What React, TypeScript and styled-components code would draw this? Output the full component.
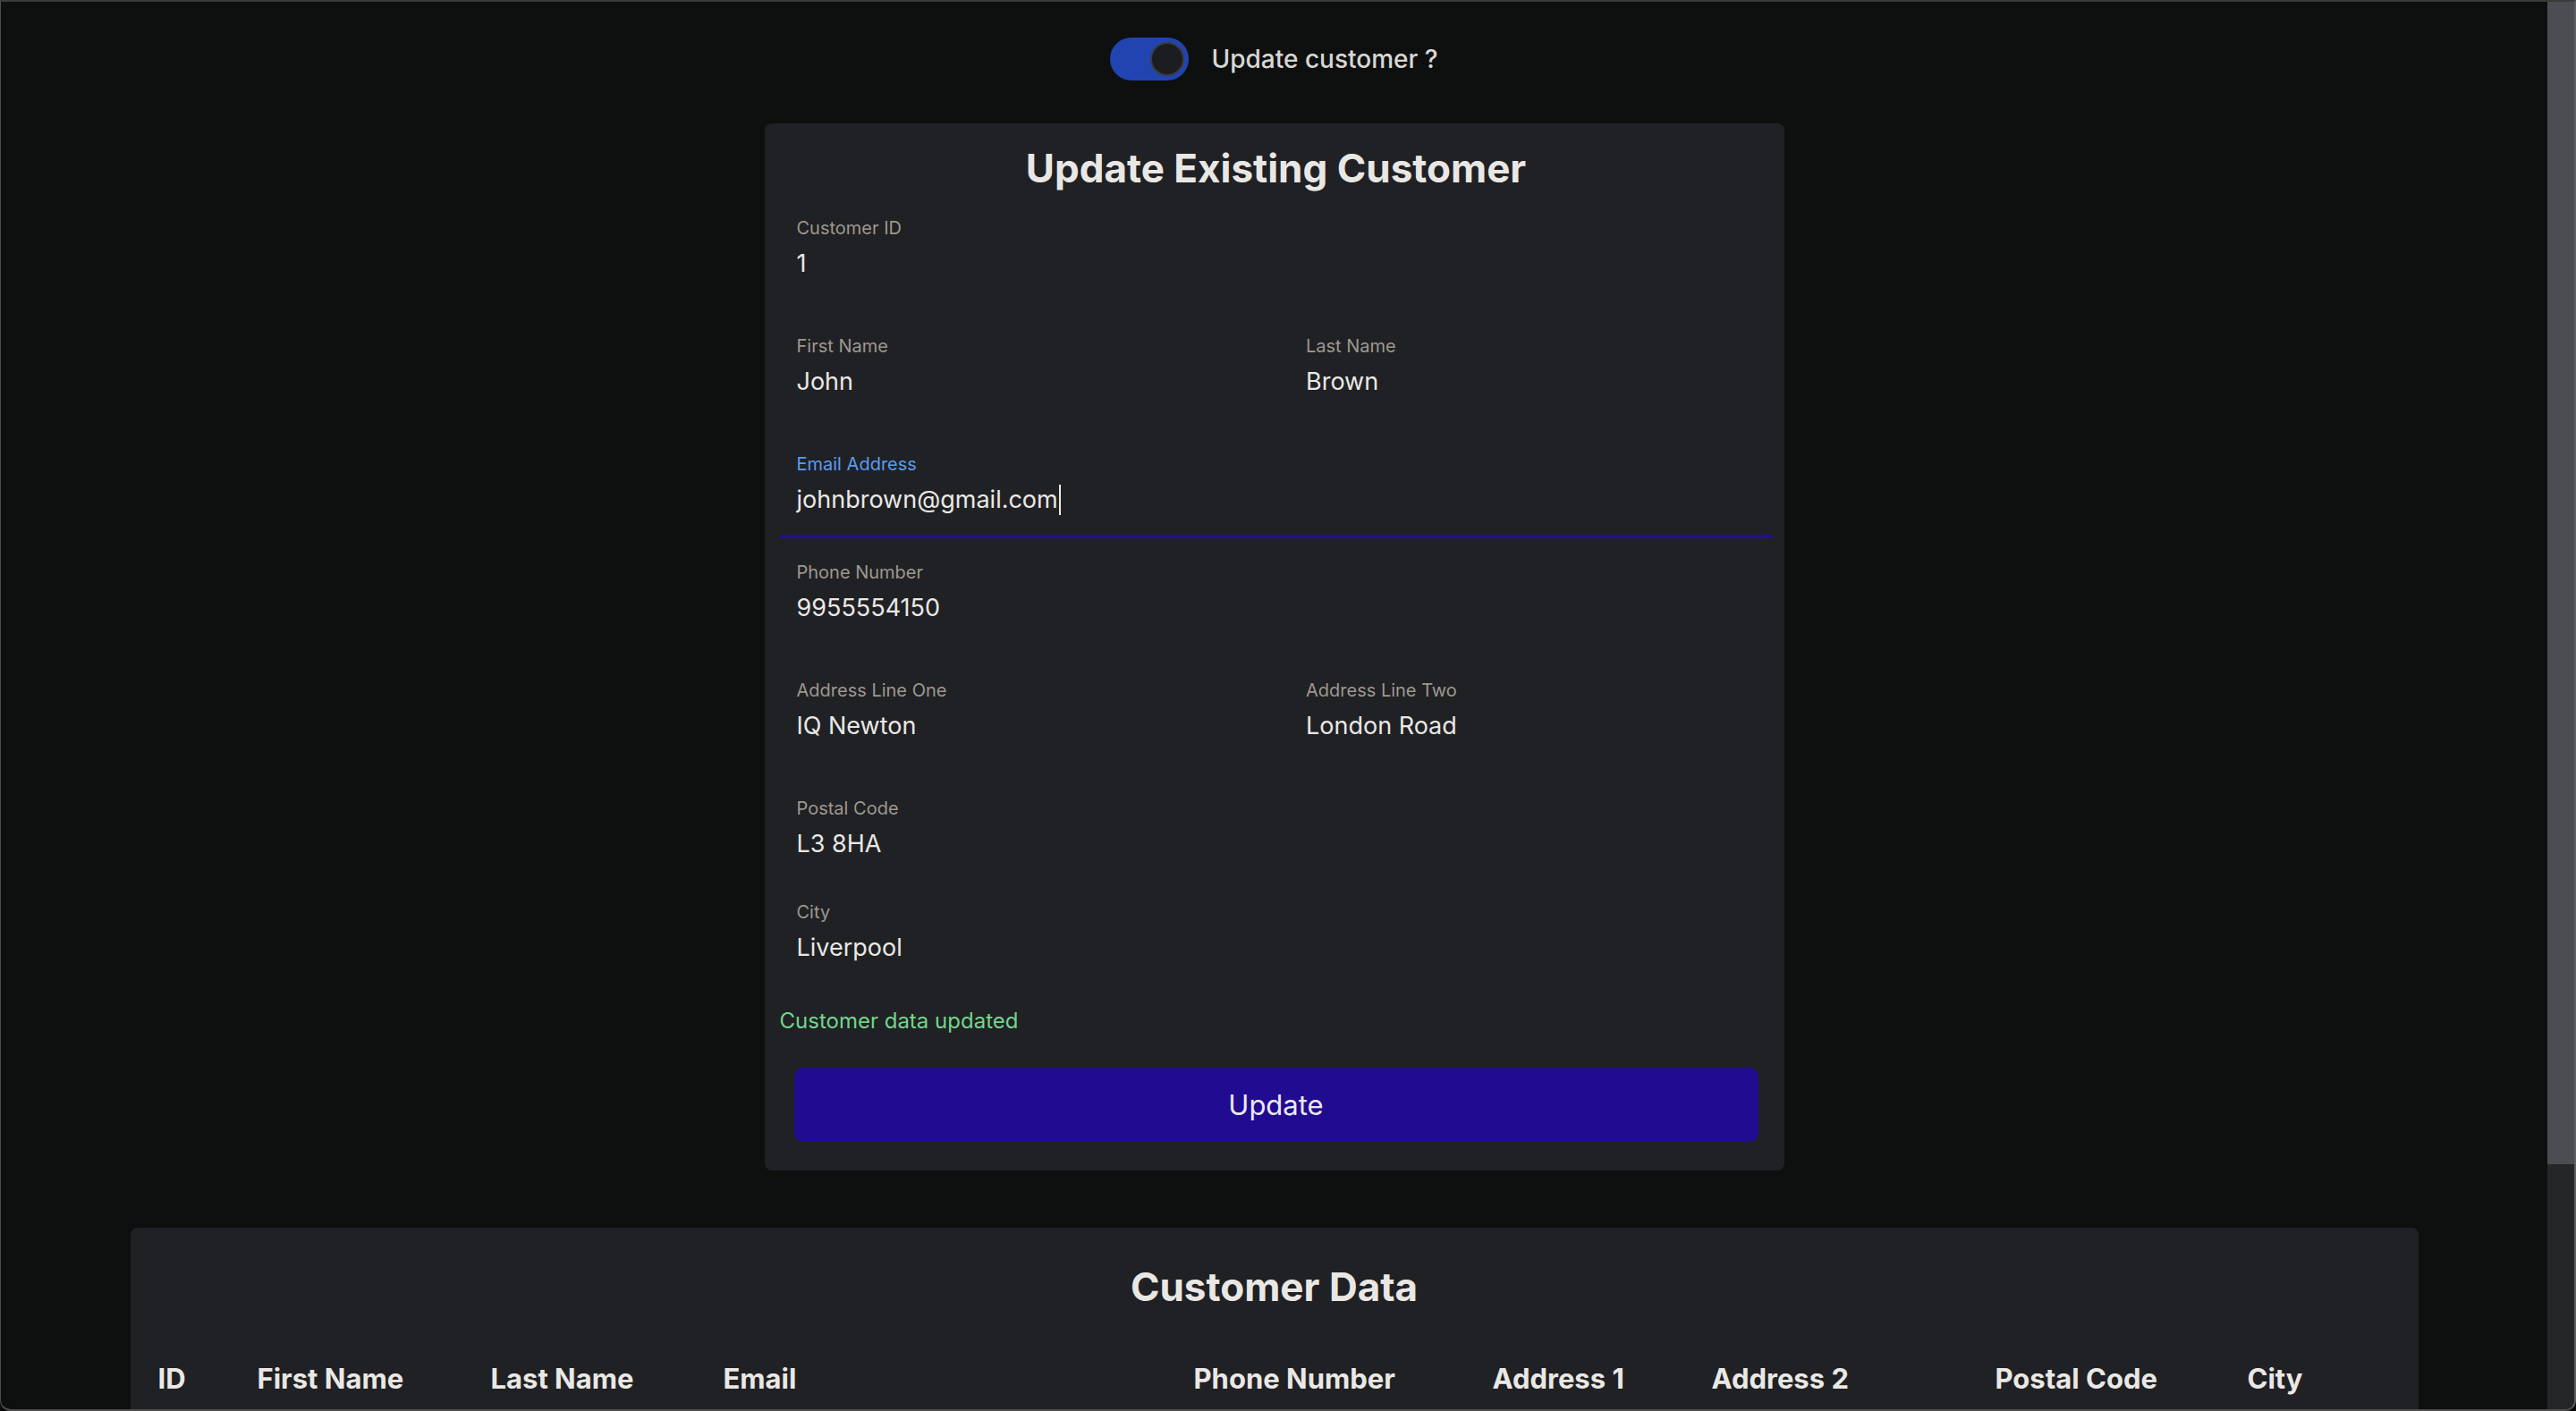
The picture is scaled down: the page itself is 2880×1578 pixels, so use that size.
import React from "react";
import styled, { createGlobalStyle } from "styled-components";

const GlobalStyle = createGlobalStyle`
  html, body {
    margin: 0;
    padding: 0;
    background: #0a0a0a;
    overflow: hidden;
  }
  * { box-sizing: border-box; }
  body {
    font-family: Inter, "Noto Sans", "Liberation Sans", sans-serif;
  }
`;

const Window = styled.div`
  width: 100vw;
  height: 100vh;
  display: flex;
  border: 1px solid #4e4e4e;
  border-top: 2px solid #3a3a3a;
  border-right: 2px solid #5e5e5e;
  border-bottom: 2px solid #4e4e4e;
  border-radius: 0 0 12px 12px;
  overflow: hidden;
  background: #0e1010;
`;

const Page = styled.main`
  flex: 1;
  min-width: 0;
  height: 100%;
  overflow: hidden;
  display: flex;
  flex-direction: column;
  align-items: center;
  padding-top: 40px;
`;

const Scrollbar = styled.div`
  width: 30px;
  flex: none;
  display: flex;
  flex-direction: column;
  background: #252628;
`;

const Thumb = styled.div`
  height: 1300px;
  background: #4a4d51;
`;

const ToggleRow = styled.label`
  display: flex;
  align-items: center;
  gap: 25px;
  height: 48px;
  cursor: pointer;
  flex: none;
`;

const Track = styled.span`
  width: 88px;
  height: 48px;
  border-radius: 24px;
  background: #2244b0;
  display: flex;
  align-items: center;
  justify-content: flex-end;
  padding: 0 5px;
`;

const Knob = styled.span`
  width: 38px;
  height: 38px;
  border-radius: 50%;
  background: #1c1d20;
  border: 2px solid #3b3c3f;
`;

const ToggleText = styled.span`
  font-size: 28px;
  line-height: 34px;
  font-weight: 500;
  color: #d9d7d2;
`;

const Card = styled.section<{ $width: number; $mt: number; $pad: string }>`
  flex: none;
  width: ${(p) => p.$width}px;
  margin-top: ${(p) => p.$mt}px;
  padding: ${(p) => p.$pad};
  background: #202124;
  border-radius: 8px;
`;

const Title = styled.h1`
  margin: 0;
  font-size: 44px;
  line-height: 53px;
  font-weight: 700;
  text-align: center;
  color: #e9e7e4;
`;

const Field = styled.div<{ $mt: number; $focused?: boolean }>`
  margin-top: ${(p) => p.$mt}px;
  height: 112px;
  padding: 17px 20px 0 19px;
  border-bottom: 4px solid ${(p) => (p.$focused ? "#22108f" : "transparent")};
`;

const Label = styled.span<{ $focused?: boolean }>`
  display: block;
  font-size: 20px;
  line-height: 24px;
  color: ${(p) => (p.$focused ? "#5b9bf0" : "#9d988f")};
`;

const Value = styled.div`
  margin-top: 11px;
  font-size: 27px;
  line-height: 34px;
  color: #eae8e5;
  white-space: nowrap;
`;

const Caret = styled.span`
  display: inline-block;
  width: 2px;
  height: 34px;
  margin-left: 1px;
  vertical-align: top;
  background: #eae8e5;
`;

const Row = styled.div<{ $mt: number }>`
  margin-top: ${(p) => p.$mt}px;
  display: grid;
  grid-template-columns: 1fr 1fr;
  column-gap: 29px;
`;

const Status = styled.p`
  margin: 24px 0 0;
  padding-left: 0;
  font-size: 24px;
  line-height: 29px;
  color: #72d58c;
`;

const Button = styled.button`
  display: block;
  width: calc(100% - 32px);
  height: 83px;
  margin: 38px 16px 0;
  border: none;
  border-radius: 10px;
  background: #210b91;
  color: #ebe8f4;
  font-family: inherit;
  font-size: 31px;
  font-weight: 400;
  cursor: pointer;
`;

const Table = styled.table`
  margin-top: 57px;
  width: 100%;
  table-layout: fixed;
  border-collapse: collapse;
`;

const Th = styled.th`
  padding: 0;
  text-align: left;
  font-size: 31px;
  line-height: 37px;
  font-weight: 700;
  color: #eae8e5;
  white-space: nowrap;
`;

type FieldProps = { label: string; value: string; mt?: number; focused?: boolean };

const FormField = ({ label, value, mt = 0, focused }: FieldProps) => (
  <Field $mt={mt} $focused={focused}>
    <Label $focused={focused}>{label}</Label>
    <Value>
      {value}
      {focused && <Caret />}
    </Value>
  </Field>
);

const columns = [
  { name: "ID", width: 111 },
  { name: "First Name", width: 261 },
  { name: "Last Name", width: 260 },
  { name: "Email", width: 526 },
  { name: "Phone Number", width: 334 },
  { name: "Address 1", width: 245 },
  { name: "Address 2", width: 317 },
  { name: "Postal Code", width: 282 },
  { name: "City", width: 0 },
];

export default function App() {
  return (
    <>
      <GlobalStyle />
      <Window>
        <Page>
          <ToggleRow>
            <Track>
              <Knob />
            </Track>
            <ToggleText>Update customer ?</ToggleText>
          </ToggleRow>

          <Card $width={1140} $mt={48} $pad="24px 13px 32px 17px">
            <Title>Update Existing Customer</Title>
            <FormField label="Customer ID" value="1" mt={11} />
            <Row $mt={20}>
              <FormField label="First Name" value="John" />
              <FormField label="Last Name" value="Brown" />
            </Row>
            <FormField label="Email Address" value="johnbrown@gmail.com" mt={20} focused />
            <FormField label="Phone Number" value="9955554150" mt={9} />
            <Row $mt={20}>
              <FormField label="Address Line One" value="IQ Newton" />
              <FormField label="Address Line Two" value="London Road" />
            </Row>
            <FormField label="Postal Code" value="L3 8HA" mt={20} />
            <FormField label="City" value="Liverpool" mt={4} />
            <Status>Customer data updated</Status>
            <Button type="button">Update</Button>
          </Card>

          <Card $width={2558} $mt={64} $pad="40px 31px 40px">
            <Title>Customer Data</Title>
            <Table>
              <colgroup>
                {columns.map((c) => (
                  <col key={c.name} style={c.width ? { width: c.width } : undefined} />
                ))}
              </colgroup>
              <thead>
                <tr>
                  {columns.map((c) => (
                    <Th key={c.name}>{c.name}</Th>
                  ))}
                </tr>
              </thead>
            </Table>
          </Card>
        </Page>
        <Scrollbar>
          <Thumb />
        </Scrollbar>
      </Window>
    </>
  );
}
